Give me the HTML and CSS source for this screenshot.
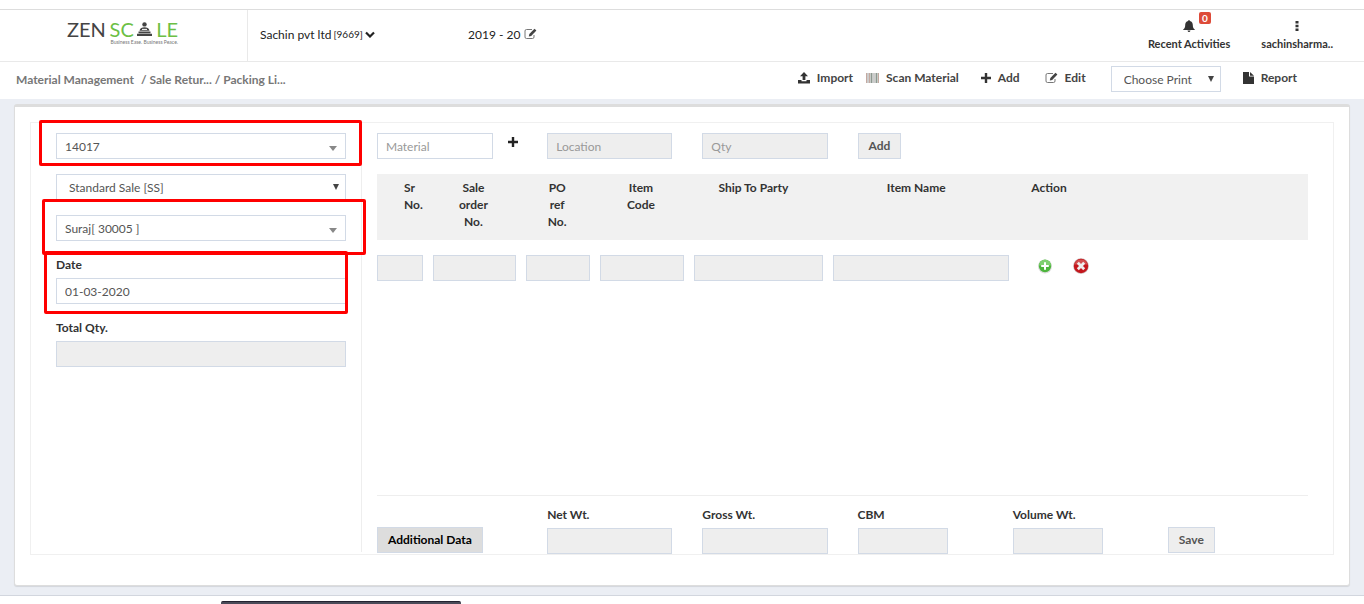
FILE: index.html
```html
<!DOCTYPE html>
<html lang="en">
<head>
  <meta charset="UTF-8">
  <meta name="viewport" content="width=device-width, initial-scale=1.0">
  <title>Packing List</title>
  <link rel="stylesheet" href="styles.css">
</head>
<body>
  <!-- Header -->
  <header class="header">
    <a class="logo" href="#">
      <span class="logo-name">
        <span class="logo-dark">ZEN</span>
        <span class="logo-green">SC</span>
        <svg class="logo-figure" width="15" height="14" viewBox="0 0 15 14">
          <circle cx="7.5" cy="2.4" r="2.2" fill="#444"/>
          <path d="M2.500 8.800C3 6 5 5.200 7.500 5.200S12 6 12.500 8.800Z" fill="#444"/>
          <path d="M5 7.400h5" stroke="#fff" stroke-width="1"/>
          <path d="M1.500 9.400h12v1.800h-12zM0 11.800h15V14H0z" fill="#444"/>
        </svg>
        <span class="logo-green">LE</span>
      </span>
      <span class="logo-tag">Business Ease. Business Peace.</span>
    </a>
    <button class="company" type="button">Sachin pvt ltd <small>[9669]</small>
      <svg width="10" height="7" viewBox="0 0 10 7"><path d="M1 1.500l4 4 4-4" fill="none" stroke="#222" stroke-width="2.200"/></svg>
    </button>
    <button class="year" type="button">2019 - 20
      <svg width="13" height="12" viewBox="0 0 13 12"><path d="M8 1.500H2.500Q1 1.500 1 3v6q0 1.500 1.500 1.500h6Q10 10.500 10 9V7" fill="none" stroke="#777"/><path d="M4.800 8.500l.5-2.500L10.500.700l1.900 1.900L7.200 8z" fill="#444"/></svg>
    </button>
    <nav class="user-nav">
      <a class="user-link" href="#">
        <svg width="12" height="12" viewBox="0 0 12 12"><path d="M6 0q.8 0 .8.900C9 1.400 9.800 3 9.800 5c0 2.200.6 3.500 2 4.500v.500H.200v-.500c1.400-1 2-2.300 2-4.500 0-2 .8-3.600 3-4.100Q5.200 0 6 0zM4.500 10.500h3Q7.200 12 6 12t-1.500-1.500z" fill="#333"/></svg>
        <span class="badge">0</span>
        <span>Recent Activities</span>
      </a>
      <a class="user-link" href="#">
        <svg width="4" height="12" viewBox="0 0 4 12"><path d="M.5 1h3v2.500h-3zM.5 4.800h3v2.500h-3zM.5 8.600h3v2.500h-3z" fill="#333"/></svg>
        <span>sachinsharma..</span>
      </a>
    </nav>
  </header>

  <!-- Breadcrumb and tools -->
  <div class="toolbar">
    <nav class="breadcrumb">
      <a href="#">Material Management</a>
      <span>/ <a href="#">Sale Retur...</a> / <a href="#">Packing Li...</a></span>
    </nav>
    <div class="tools">
      <a class="tool" href="#">
        <svg width="12" height="12" viewBox="0 0 12 12"><path d="M6 0l4 4.200H7.400V8H4.600V4.200H2zM0 8h3.500v1.200h5V8H12v3.500H0z" fill="#333"/></svg>
        Import
      </a>
      <a class="tool gap-sm" href="#">
        <svg width="13" height="10" viewBox="0 0 13 10"><path d="M.5 0v10M3.500 0v10M12.500 0v10" stroke="#c4a9a0"/><path d="M2 0v10M8 0v10" stroke="#999"/><path d="M5.500 0v10M10.500 0v10" stroke="#8d9890" stroke-width="2"/></svg>
        Scan Material
      </a>
      <a class="tool gap-md" href="#">
        <svg width="10" height="10" viewBox="0 0 10 10"><path d="M5 0v10M0 5h10" stroke="#333" stroke-width="2.400"/></svg>
        Add
      </a>
      <a class="tool gap-lg" href="#">
        <svg width="13" height="12" viewBox="0 0 13 12"><path d="M8 1.500H2.500Q1 1.500 1 3v6q0 1.500 1.500 1.500h6Q10 10.500 10 9V7" fill="none" stroke="#777"/><path d="M4.800 8.500l.5-2.500L10.500.700l1.900 1.900L7.200 8z" fill="#444"/></svg>
        Edit
      </a>
      <span class="select native gap-lg">
        <select aria-label="Choose Print"><option>Choose Print</option></select>
      </span>
      <a class="tool gap-md" href="#">
        <svg width="11" height="12" viewBox="0 0 11 12"><path d="M0 0h6v4.500h5V12H0zM7 0l4 3.700H7z" fill="#333"/></svg>
        Report
      </a>
    </div>
  </div>

  <main class="main">
    <div class="panel">
      <form class="sheet">
        <!-- Left column -->
        <div class="side">
          <div class="field">
            <span class="select">
              <select aria-label="Document number"><option>14017</option></select>
            </span>
            <span class="mark mark-number"></span>
          </div>
          <div class="field">
            <span class="select native">
              <select aria-label="Sale type"><option>Standard Sale [SS]</option></select>
            </span>
          </div>
          <div class="field">
            <span class="select">
              <select aria-label="Party"><option>Suraj[ 30005 ]</option></select>
            </span>
            <span class="mark mark-party"></span>
          </div>
          <div class="field">
            <label for="date">Date</label>
            <input type="text" id="date" value="01-03-2020">
            <span class="mark mark-date"></span>
          </div>
          <div class="field">
            <label for="total-qty">Total Qty.</label>
            <input type="text" id="total-qty" disabled>
          </div>
        </div>

        <!-- Right column -->
        <div class="content">
          <div class="row">
            <div class="material">
              <input type="text" placeholder="Material" aria-label="Material">
              <button class="btn-plus" type="button" aria-label="New material">
                <svg width="10" height="10" viewBox="0 0 10 10"><path d="M5 0v10M0 5h10" stroke="#222" stroke-width="2.400"/></svg>
              </button>
            </div>
            <div class="cell"><input type="text" placeholder="Location" aria-label="Location" disabled></div>
            <div class="cell"><input type="text" placeholder="Qty" aria-label="Qty" disabled></div>
            <div class="cell"><button class="btn" type="button">Add</button></div>
          </div>

          <table class="items">
            <colgroup>
              <col class="w6"><col class="w10"><col class="w8"><col class="w10"><col class="w15"><col class="w20"><col>
            </colgroup>
            <thead>
              <tr>
                <th class="th-sr">Sr No.</th>
                <th>Sale order No.</th>
                <th>PO<br>ref<br>No.</th>
                <th>Item Code</th>
                <th class="th-wide">Ship To Party</th>
                <th class="th-wide">Item Name</th>
                <th class="th-action">Action</th>
              </tr>
            </thead>
            <tbody>
              <tr>
                <td><input type="text" aria-label="Sr No." disabled></td>
                <td><input type="text" aria-label="Sale order No." disabled></td>
                <td><input type="text" aria-label="PO ref No." disabled></td>
                <td><input type="text" aria-label="Item Code" disabled></td>
                <td><input type="text" aria-label="Ship To Party" disabled></td>
                <td><input type="text" aria-label="Item Name" disabled></td>
                <td>
                  <div class="actions">
                    <button type="button" aria-label="Add row">
                      <svg width="16" height="16" viewBox="0 0 16 16">
                        <circle cx="8" cy="8.500" r="7" fill="#ddd"/>
                        <circle cx="8" cy="8" r="6.200" fill="#4db53c"/>
                        <path d="M2 7.500a6 6 0 0 1 12 0Z" fill="#7fd070"/>
                        <path d="M8 4.200v7.600M4.200 8h7.600" stroke="#fff" stroke-width="2"/>
                      </svg>
                    </button>
                    <button type="button" aria-label="Delete row">
                      <svg width="16" height="16" viewBox="0 0 16 16">
                        <circle cx="8" cy="8" r="7.800" fill="#c9b5b5"/>
                        <circle cx="8" cy="8" r="7.200" fill="#c4161c"/>
                        <path d="M1.700 6.500a6.500 6.500 0 0 1 12.600 0Z" fill="#d25050"/>
                        <path d="M4.800 4.800l6.400 6.400M11.200 4.800l-6.400 6.400" stroke="#eee" stroke-width="2.800"/>
                      </svg>
                    </button>
                  </div>
                </td>
              </tr>
            </tbody>
          </table>

          <div class="row totals">
            <div><button class="btn btn-dark" type="button">Additional Data</button></div>
            <div class="cell"><label for="net-wt">Net Wt.</label><input type="text" id="net-wt" disabled></div>
            <div class="cell"><label for="gross-wt">Gross Wt.</label><input type="text" id="gross-wt" disabled></div>
            <div class="cell"><label for="cbm">CBM</label><input class="short" type="text" id="cbm" disabled></div>
            <div class="cell"><label for="volume-wt">Volume Wt.</label><input class="short" type="text" id="volume-wt" disabled></div>
            <div class="cell"><button class="btn btn-save" type="button">Save</button></div>
          </div>
        </div>
      </form>
    </div>
  </main>

  <footer class="footer">
    <div class="footer-bar"></div>
  </footer>
</body>
</html>
```
FILE: styles.css
```css
* {
  box-sizing: border-box;
}
body {
  margin: 0;
  padding-top: 9px;
  min-height: 100vh;
  display: flex;
  flex-direction: column;
  font-family: Lato, "Liberation Sans", sans-serif;
  font-size: 12px;
  line-height: 17px;
  color: #333;
  background: #fff;
}
a {
  color: inherit;
  text-decoration: none;
}
svg {
  display: block;
  flex: none;
}
button,
input,
select {
  font: inherit;
  color: #555;
}
button {
  cursor: pointer;
}

/* Header */
.header {
  display: flex;
  height: 53px;
  border-top: 1px solid #ddd;
  border-bottom: 1px solid #e9e9e9;
}
.logo {
  width: 248px;
  padding: 9px 69px 0 67px;
  border-right: 1px solid #e9e9e9;
}
.logo-name {
  display: flex;
  justify-content: space-between;
  align-items: center;
  font-size: 20px;
  line-height: 20px;
}
.logo-dark {
  color: #444;
}
.logo-green {
  color: #6cbf45;
}
.logo-tag {
  display: block;
  font-size: 5px;
  line-height: 6px;
  text-align: right;
  color: #777;
  white-space: nowrap;
}
.company,
.year {
  display: flex;
  align-items: center;
  height: 48px;
  padding: 0;
  border: none;
  background: none;
  color: #222;
}
.company {
  width: 208px;
  margin-left: 12px;
  gap: 2px;
}
.company small {
  font-size: 10px;
}
.year {
  gap: 4px;
}
.user-nav {
  display: flex;
  gap: 31px;
  margin-left: auto;
  padding: 10px 31px 0 0;
}
.user-link {
  position: relative;
  display: flex;
  flex-direction: column;
  align-items: center;
  gap: 3px;
  font-size: 11px;
  font-weight: 700;
  color: #333;
}
.badge {
  position: absolute;
  top: -8px;
  left: 51px;
  padding: 0 3px;
  border-radius: 2px;
  font-size: 10px;
  line-height: 12px;
  color: #fff;
  background: #dd4b39;
}

/* Toolbar */
.toolbar {
  display: flex;
  align-items: center;
  justify-content: space-between;
  height: 37px;
  padding: 0 67px 3px 16px;
}
.breadcrumb {
  display: flex;
  gap: 7px;
  font-weight: 700;
  color: #777;
}
.tools {
  display: flex;
  align-items: center;
}
.tool {
  display: flex;
  align-items: center;
  gap: 7px;
  padding-bottom: 3px;
  font-weight: 700;
  color: #444;
}
.gap-sm {
  margin-left: 13px;
}
.gap-md {
  margin-left: 22px;
}
.gap-lg {
  margin-left: 25px;
}

/* Fields */
input,
select {
  display: block;
  width: 100%;
  height: 26px;
  padding: 0 8px;
  border: 1px solid #d2dae6;
  border-radius: 0;
  background: #fff;
}
input:disabled {
  background: #eee;
}
input::placeholder {
  color: #999;
}
label {
  display: block;
  height: 18px;
  margin-bottom: 4px;
  line-height: 18px;
  font-weight: 700;
}
.select {
  position: relative;
  display: block;
}
.select select {
  appearance: none;
}
.select::after {
  content: "";
  position: absolute;
  top: 13px;
  right: 9px;
  border: 4px solid transparent;
  border-top: 5px solid #888;
  border-bottom: none;
  pointer-events: none;
}
.native select {
  padding: 0 12px;
}
.native::after {
  top: 10px;
  right: 7px;
  border-width: 6px 3px 0;
  border-top-color: #444;
}
.tools .select {
  width: 110px;
}

/* Panel */
.main {
  flex: 1;
  display: flex;
  padding: 5px 14px 9px;
  background: #ebeef4;
}
.panel {
  flex: 1;
  display: flex;
  padding: 15px 15px 30px;
  border: 1px solid #ddd;
  border-top-width: 3px;
  border-radius: 3px;
  background: #fff;
  box-shadow: 0 1px 1px rgba(0, 0, 0, 0.1);
}
.sheet {
  flex: 1;
  display: flex;
  border: 1px solid #f0f0f0;
}
.side {
  width: 331px;
  margin-bottom: 2px;
  padding: 10px 15px 0 25px;
  border-right: 1px solid #eee;
}
.field {
  position: relative;
  margin-bottom: 15px;
}

/* Red markers */
.mark {
  position: absolute;
  border: 3px solid #f00;
  border-radius: 2px;
  pointer-events: none;
}
.mark-number {
  inset: -13px -16px -7px -17px;
}
.mark-party {
  inset: -16px -20px -14px -14px;
}
.mark-date {
  inset: -5px -2px -10px -12px;
}

.content {
  flex: 1;
  display: flex;
  flex-direction: column;
  padding: 10px 25px 0 15px;
}
.row {
  display: grid;
  grid-template-columns: repeat(6, 1fr);
}
.cell {
  padding: 0 15px;
}
.material {
  display: flex;
  gap: 15px;
}
.material input {
  width: 116px;
}
.btn-plus {
  height: 17px;
  padding: 0;
  border: none;
  background: none;
}
.btn {
  height: 26px;
  padding: 0 10px 1px;
  border: 1px solid #d2dae6;
  background: #eee;
  font-weight: 700;
  white-space: nowrap;
}
.btn-dark {
  color: #000;
  background: #ddd;
}

/* Items table */
.items {
  width: 100%;
  margin-top: 15px;
  table-layout: fixed;
  border-collapse: collapse;
}
.w6 { width: 6%; }
.w8 { width: 8%; }
.w10 { width: 10%; }
.w15 { width: 15%; }
.w20 { width: 20%; }
.items thead {
  background: #f1f1f1;
}
.items th {
  height: 66px;
  padding: 5px 32px 0 20px;
  font-weight: 700;
  vertical-align: top;
}
.items th.th-sr {
  padding: 5px 0 0 27px;
  text-align: left;
}
.items th.th-wide {
  padding: 5px 20px 0 0;
}
.items th.th-action {
  padding: 5px 0 0 12px;
  text-align: left;
}
.items td {
  padding: 15px 10px 0 0;
}
.actions {
  display: flex;
  align-items: flex-start;
  gap: 20px;
  height: 20px;
  padding-left: 18px;
}
.actions button {
  padding: 0;
  border: none;
  background: none;
}

.totals {
  margin-top: auto;
  padding-top: 10px;
  border-top: 1px solid #eee;
  align-items: end;
}
.totals .btn {
  display: block;
  margin-bottom: 1px;
}
.totals .short {
  width: 90px;
}

/* Footer */
.footer {
  height: 9px;
  padding: 5px 0 0 221px;
  border-top: 1px solid #d2d6de;
}
.footer-bar {
  width: 240px;
  height: 3px;
  border-top: 1px solid #222230;
  border-radius: 2px 2px 0 0;
  background: #4a4a58;
}
```
